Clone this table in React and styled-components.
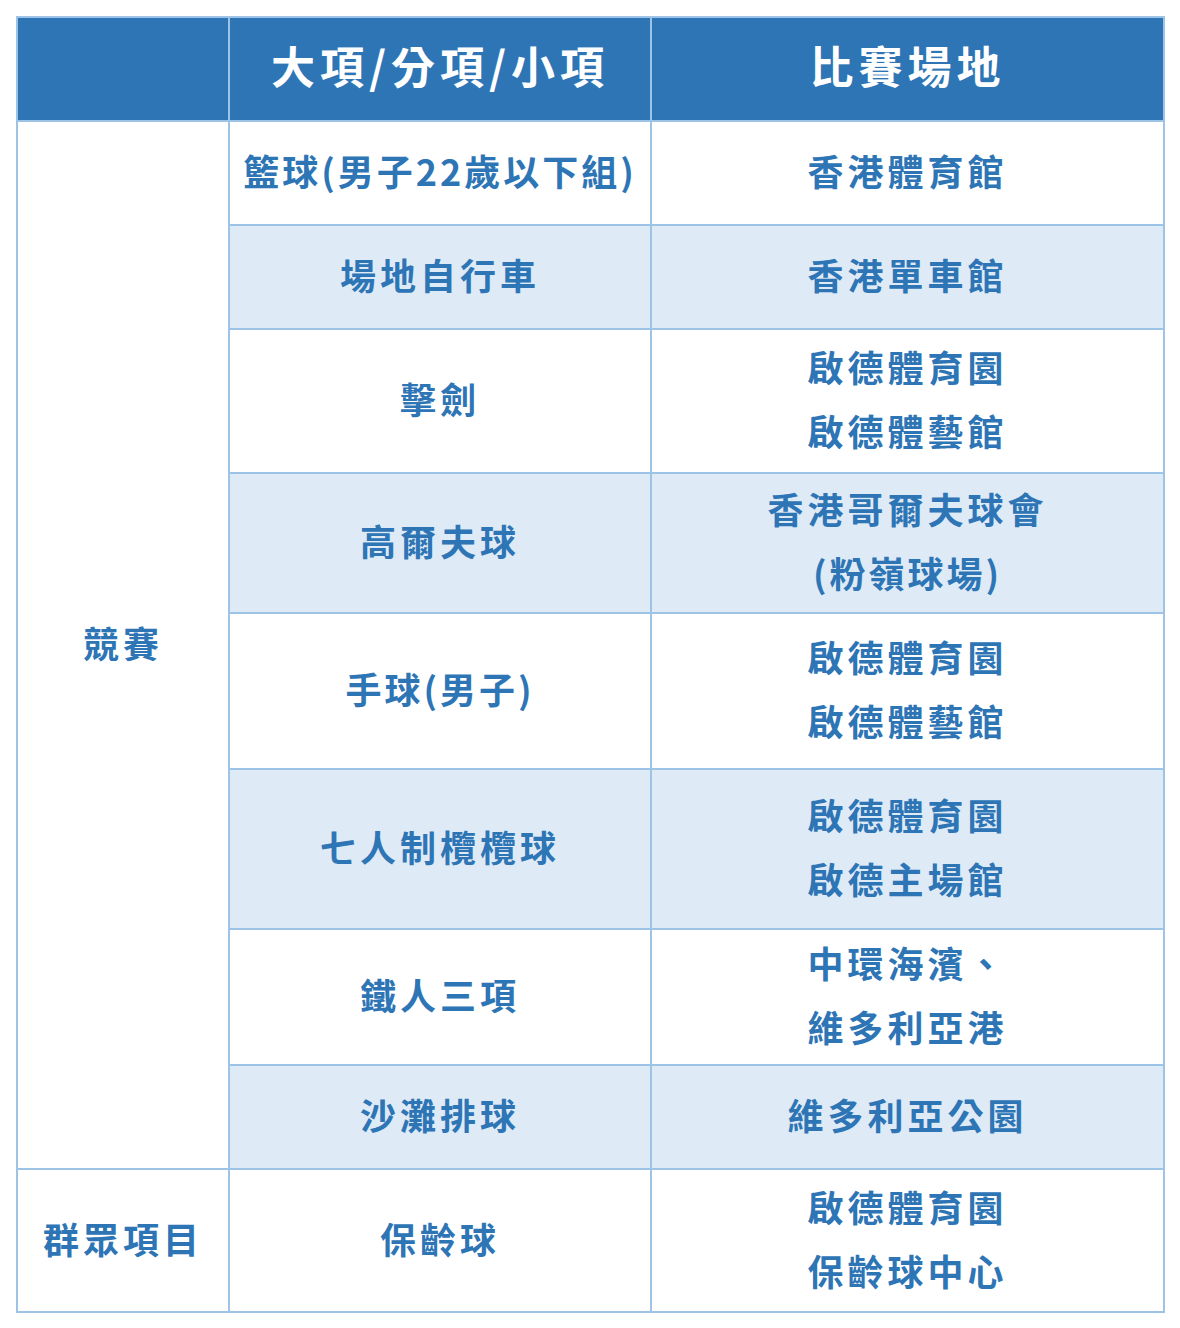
import styled, { createGlobalStyle } from 'styled-components'

const GlobalStyle = createGlobalStyle`
  body {
    margin: 0;
    background: #ffffff;
    font-family: "Noto Sans CJK TC", "Noto Sans", sans-serif;
  }
`

const Page = styled.div`
  padding: 16px 0 0 16px;
`

const Table = styled.table`
  border-collapse: collapse;
  table-layout: fixed;
  width: 1147px;
  border: 2px solid #9dc3e6;
  color: #2e75b6;
  font-weight: 700;

  col.cat { width: 212px; }
  col.item { width: 422px; }
  col.venue { width: 513px; }
`

const HeadCell = styled.th`
  height: 94px;
  padding: 0 0 8px 0;
  background: #2e75b6;
  color: #ffffff;
  border: 2px solid #9dc3e6;
  font-size: 44px;
  font-weight: 700;
  letter-spacing: 5px;
  text-align: center;
  vertical-align: middle;
`

const Cell = styled.td`
  padding: 0 0 6px 0;
  border: 2px solid #9dc3e6;
  background: ${(p) => (p.$shade ? '#deebf7' : '#ffffff')};
  height: ${(p) => p.$h - 6}px;
  font-size: 36px;
  line-height: 64px;
  letter-spacing: 4px;
  text-align: center;
  vertical-align: middle;
  white-space: nowrap;
`

// strings with latin parens/digits run a touch tighter in the source
const Line = styled.div`
  display: block;
  letter-spacing: ${(p) => (p.$tight ? '3px' : 'inherit')};
`

const tight = (s) => /[()0-9]/.test(s)

const rows = [
  { item: '籃球(男子22歲以下組)', venue: ['香港體育館'], h: 102 },
  { item: '場地自行車', venue: ['香港單車館'], h: 102 },
  { item: '擊劍', venue: ['啟德體育園', '啟德體藝館'], h: 142 },
  { item: '高爾夫球', venue: ['香港哥爾夫球會', '(粉嶺球場)'], h: 138 },
  { item: '手球(男子)', venue: ['啟德體育園', '啟德體藝館'], h: 154 },
  { item: '七人制欖欖球', venue: ['啟德體育園', '啟德主場館'], h: 158 },
  { item: '鐵人三項', venue: ['中環海濱、', '維多利亞港'], h: 134 },
  { item: '沙灘排球', venue: ['維多利亞公園'], h: 102 },
]

export default function App() {
  return (
    <Page>
      <GlobalStyle />
      <Table>
        <colgroup>
          <col className="cat" />
          <col className="item" />
          <col className="venue" />
        </colgroup>
        <thead>
          <tr>
            <HeadCell />
            <HeadCell>大項/分項/小項</HeadCell>
            <HeadCell>比賽場地</HeadCell>
          </tr>
        </thead>
        <tbody>
          {rows.map((r, i) => (
            <tr key={r.item}>
              {i === 0 && <Cell rowSpan={rows.length}>競賽</Cell>}
              <Cell $h={r.h} $shade={i % 2 === 1}>
                <Line $tight={tight(r.item)}>{r.item}</Line>
              </Cell>
              <Cell $h={r.h} $shade={i % 2 === 1}>
                {r.venue.map((v) => (
                  <Line key={v} $tight={tight(v)}>{v}</Line>
                ))}
              </Cell>
            </tr>
          ))}
          <tr>
            <Cell $h={141}>群眾項目</Cell>
            <Cell $h={141}>保齡球</Cell>
            <Cell $h={141}>
              <Line>啟德體育園</Line>
              <Line>保齡球中心</Line>
            </Cell>
          </tr>
        </tbody>
      </Table>
    </Page>
  )
}
